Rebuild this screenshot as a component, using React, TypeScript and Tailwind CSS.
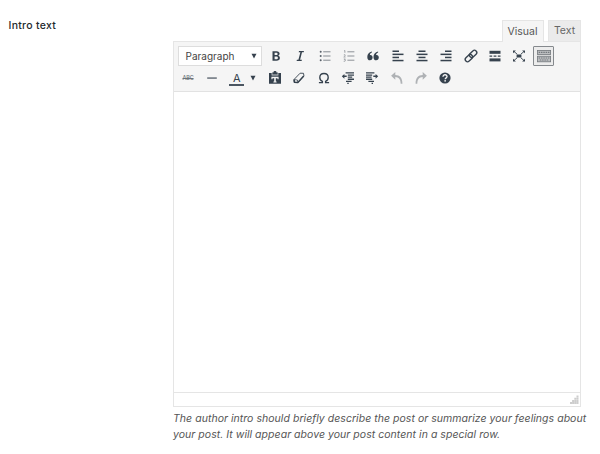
import React from 'react';

type IconProps = { children: React.ReactNode; className?: string };

// Every glyph is drawn on a 20x20 grid centred on 10,10.
function Icon({ children, className = 'text-[#36424e]' }: IconProps) {
  return (
    <svg viewBox="0 0 20 20" className={`h-5 w-5 shrink-0 ${className}`} fill="currentColor">
      {children}
    </svg>
  );
}

function Tool({ label, children }: { label: string; children: React.ReactNode }) {
  return (
    <button aria-label={label} className="flex h-[22px] w-[24.33px] shrink-0 items-center justify-center">
      {children}
    </button>
  );
}

const line = { fill: 'none', stroke: 'currentColor' };

function Lines({ rows }: { rows: number[][] }) {
  return (
    <>
      {rows.map(([x, y, w], i) => (
        <rect key={i} x={x} y={y} width={w} height={1.5} />
      ))}
    </>
  );
}

const Bold = () => (
  <Icon>
    <path fillRule="evenodd" d="M6.5 5.2h4.1c1.9 0 3 .9 3 2.4 0 1-.5 1.7-1.4 2.1 1.1.3 1.7 1.1 1.7 2.3 0 1.8-1.3 2.8-3.4 2.8h-4zm2.1 1.5v2.4h1.5c1 0 1.5-.4 1.5-1.2s-.5-1.2-1.5-1.2zm0 3.9v2.7h1.7c1 0 1.6-.5 1.6-1.4 0-.8-.6-1.3-1.7-1.3z" />
  </Icon>
);

const Italic = () => (
  <Icon>
    <path d="M9 5.1h5l-.3 1.2H12l-1.9 7.5h1.8l-.3 1.2h-5l.3-1.2h1.5l2-7.5H8.7z" />
  </Icon>
);

const Bullets = () => (
  <Icon className="text-[#858b91]">
    {[5.8, 10, 14.2].map((y) => (
      <g key={y}>
        <circle cx="5.7" cy={y} r="1" fill="#59616a" />
        <rect x="8.2" y={y - 0.5} width="7.3" height="1" />
      </g>
    ))}
  </Icon>
);

const Numbers = () => (
  <Icon className="text-[#8d9297]">
    {[5.8, 10, 14.2].map((y) => (
      <rect key={y} x="8.4" y={y - 0.5} width="7" height="1" />
    ))}
    <path {...line} strokeWidth=".8" d="M5 5l.9-.5v2.3M4.8 8.9c1.8-.8 1.9.5 0 2.1h1.8M4.8 13h1.6l-.9 1c1.6.2 1 1.7-.8 1.3" />
  </Icon>
);

const Quote = () => (
  <Icon>
    <path d="M8.9 5.5v1.1c-1.4.6-2 1.5-2 2.5.2-.1.4-.1.6-.1 1.2 0 2.1.9 2.1 2.5S8.6 14.3 7 14.3c-1.7 0-2.7-1.3-2.7-3.4 0-2.7 1.6-4.8 4.6-5.4zm6.2 0v1.1c-1.4.6-2 1.5-2 2.5.2-.1.4-.1.6-.1 1.2 0 2.1.9 2.1 2.5s-1 2.8-2.6 2.8c-1.7 0-2.7-1.3-2.7-3.4 0-2.7 1.6-4.8 4.6-5.4z" />
  </Icon>
);

const AlignLeft = () => (
  <Icon>
    <Lines rows={[[4.5, 4.5, 6.5], [4.5, 7.6, 11], [4.5, 10.7, 6.5], [4.5, 13.8, 11]]} />
  </Icon>
);
const AlignCenter = () => (
  <Icon>
    <Lines rows={[[6.5, 4.5, 7], [4.5, 7.6, 11], [6.5, 10.7, 7], [4.5, 13.8, 11]]} />
  </Icon>
);
const AlignRight = () => (
  <Icon>
    <Lines rows={[[9, 4.5, 6.5], [4.5, 7.6, 11], [9, 10.7, 6.5], [4.5, 13.8, 11]]} />
  </Icon>
);

const Link = () => (
  <Icon>
    <g {...line} strokeWidth="1.35" transform="rotate(-45 10 10)">
      <rect x="2.8" y="7.7" width="8.4" height="4.6" rx="2.3" />
      <rect x="8.8" y="7.7" width="8.4" height="4.6" rx="2.3" />
    </g>
  </Icon>
);

const ReadMore = () => (
  <Icon>
    <rect x="4.5" y="4.8" width="11" height="3" />
    <path d="M4.5 9.5h2.7v1.2H4.5zm4.1 0h2.8v1.2H8.6zm4.2 0h2.7v1.2h-2.7z" />
    <rect x="4.5" y="12.4" width="11" height="3" />
  </Icon>
);

const Fullscreen = () => (
  <Icon>
    <path {...line} strokeWidth=".9" d="M5 5.5l3.2 2.7M15 5.5l-3.2 2.7M5 14.5l3.2-2.7M15 14.5l-3.2-2.7" />
    <path d="M7.6 8.6h4.8v2.8H7.6zM4 4.4h2.9L4 7.2zM16 4.4h-2.9L16 7.2zM4 15.6h2.9L4 12.8zM16 15.6h-2.9L16 12.8z" />
  </Icon>
);

const Keyboard = () => (
  <Icon className="text-[#74797e]">
    <rect x="3.2" y="4.2" width="13.6" height="4.4" fill="#bcbec0" />
    <rect x="3.2" y="10" width="13.6" height="6" fill="#bcbec0" />
    <rect {...line} strokeWidth=".8" x="3.4" y="4.4" width="13.2" height="4" />
    <rect {...line} strokeWidth=".8" x="3.4" y="10.2" width="13.2" height="5.6" />
    <path {...line} strokeWidth="1.1" strokeDasharray="1.5 .8" d="M4.7 6.4h11M4.7 12h11M5.8 14h9" />
  </Icon>
);

const Paste = () => (
  <Icon>
    <path d="M4 5h3.2v-.6h1.2c.1-1 .8-1.4 1.6-1.4s1.5.4 1.6 1.4h1.2V5H16v10.8H4z" />
    <path fill="#c9cdd0" d="M6.6 5h.8v1.6h5.2V5h.8v2.4H6.6z" />
    <path fill="#f5f5f5" d="M6.4 8.8h7.2v2.4h-1.1v-1h-1.7v3.2h.8v1.1H8.4v-1.1h.8v-3.2H7.5v1H6.4z" />
  </Icon>
);

const Eraser = () => (
  <Icon>
    <path {...line} strokeWidth=".9" strokeLinejoin="round" d="M5 11.5l6.1-6.3 3.4.1.4 2.5-6 6.7-3.6-.2z" />
    <path {...line} strokeWidth="1.5" strokeLinejoin="round" d="M5.1 11.6l.3 2.6 3.4.3 6-6.6" />
    <path {...line} strokeWidth=".8" d="M5.2 11.6l3.2.4.5 2.2" />
  </Icon>
);

const Omega = () => (
  <Icon>
    <path {...line} strokeWidth="1.35" d="M4.9 14.6h3.5v-1.2C6.7 12.6 5.8 11.2 5.8 9.5c0-2.4 1.7-4 4.2-4s4.2 1.6 4.2 4c0 1.7-.9 3.1-2.6 3.9v1.2h3.5" />
  </Icon>
);

const Outdent = () => (
  <Icon>
    <path d="M7.6 4.3H16v1.3H7.6zm2.2 2.1H16v1.3H9.8zm0 2.1h4.4v1.3H9.8zm0 2.1H16v1.3H9.8zm-1.8 2.1h5.6V14H8zM3.8 8.3l2.6-2.4v1.6h2.3v1.6H6.4v1.6zM9.3 14.8h1.4v1.2H9.3z" />
  </Icon>
);
const Indent = () => (
  <Icon>
    <path d="M4 4.3h8.4v1.3H4zm0 2.1h6.2v1.3H4zm0 2.1h5.6v1.3H4zm0 2.1h6.2v1.3H4zm2.4 2.1H12V14H6.4zM16.2 8.3l-2.6-2.4v1.6h-2.3v1.6h2.3v1.6zM9.6 14.8H11v1.2H9.6z" />
  </Icon>
);

const Undo = () => (
  <Icon className="text-[#afb2b5]">
    <path d="M4.1 7.8l4.2-3.9v3C12.9 7 15.5 10 15.4 15.7h-1.7c-.1-4.4-1.9-6.4-5.4-6.7v2.8z" />
  </Icon>
);
const Redo = () => (
  <Icon className="text-[#afb2b5]">
    <path d="M15.9 7.8l-4.2-3.9v3C7.1 7 4.5 10 4.6 15.7h1.7c.1-4.4 1.9-6.4 5.4-6.7v2.8z" />
  </Icon>
);

const Help = () => (
  <Icon>
    <circle cx="10" cy="10" r="5.6" />
    <path {...line} stroke="#f5f5f5" strokeWidth="1.4" d="M8 8.7c0-2.8 4.2-2.5 4 0-.1 1.2-1.8 1.1-1.8 2.5" />
    <rect x="9.4" y="12.1" width="1.5" height="1.5" fill="#f5f5f5" />
  </Icon>
);

function Arrow() {
  return (
    <svg viewBox="0 0 6 6" className="h-1.5 w-1.5 shrink-0 text-[#36424e]" fill="currentColor">
      <path d="M.5 .8h5L3 5.6z" />
    </svg>
  );
}

export default function App() {
  return (
    <div className="flex h-[454px] w-[600px] overflow-hidden bg-white font-['Inter','Liberation_Sans',sans-serif] text-[#555]">
      <div className="w-[173px] shrink-0 pl-[8.5px] pt-[18px] text-[10.5px] font-medium leading-4 tracking-[0.28px] text-[#23282d]">
        Intro text
      </div>
      <div className="w-[427px] shrink-0 pt-5">
        <div className="flex h-[21px] w-[408px] justify-end gap-1 text-[10.5px] leading-5">
          <button className="z-10 h-[22px] w-[42px] border border-b-0 border-[#e5e5e5] bg-[#f5f5f5] pr-px text-[#555]">Visual</button>
          <button className="h-[21px] w-[33px] border border-b-0 border-[#e5e5e5] bg-[#ebebeb] text-[#666]">Text</button>
        </div>
        <div className="flex h-[366px] w-[408px] flex-col border border-[#e5e5e5]">
          <div className="h-[50px] shrink-0 border-b border-[#e2e2e2] bg-[#f5f5f5] pl-1 pt-[3px]">
            <div className="flex h-[22px] items-center">
              <button className="mr-[2px] flex h-5 w-[84px] shrink-0 items-center justify-between border border-[#ddd] bg-white pl-[6.5px] pr-1 text-[10px] text-[#444]">
                <span className="pt-px">Paragraph</span>
                <Arrow />
              </button>
              <Tool label="Bold"><Bold /></Tool>
              <Tool label="Italic"><Italic /></Tool>
              <Tool label="Bulleted list"><Bullets /></Tool>
              <Tool label="Numbered list"><Numbers /></Tool>
              <Tool label="Blockquote"><Quote /></Tool>
              <Tool label="Align left"><AlignLeft /></Tool>
              <Tool label="Align center"><AlignCenter /></Tool>
              <Tool label="Align right"><AlignRight /></Tool>
              <Tool label="Insert link"><Link /></Tool>
              <Tool label="Read more"><ReadMore /></Tool>
              <Tool label="Fullscreen"><Fullscreen /></Tool>
              <button aria-label="Toolbar toggle" className="ml-[1.5px] flex h-5 w-[21px] shrink-0 items-center justify-center rounded-[1px] border border-[#85898d] bg-[#ececec]">
                <Keyboard />
              </button>
            </div>
            <div className="flex h-[22px] items-center">
              <button className="flex h-[22px] w-[22px] shrink-0 items-center justify-center pr-[2px] text-[5.5px] font-medium tracking-[-0.2px] text-[#6c747b] line-through">ABC</button>
              <Tool label="Horizontal line">
                <Icon><rect x="5.2" y="9.5" width="9.6" height="1.1" /></Icon>
              </Tool>
              <button className="flex h-[22px] w-[38.5px] shrink-0 items-center gap-[6px] pl-[5px]">
                <span className="flex h-[15px] w-[15px] flex-col items-center border-b-2 border-[#4b5661] text-[11px] leading-[14px] text-[#36424e]">A</span>
                <Arrow />
              </button>
              <Tool label="Paste as text"><Paste /></Tool>
              <Tool label="Clear formatting"><Eraser /></Tool>
              <Tool label="Special character"><Omega /></Tool>
              <Tool label="Decrease indent"><Outdent /></Tool>
              <Tool label="Increase indent"><Indent /></Tool>
              <Tool label="Undo"><Undo /></Tool>
              <Tool label="Redo"><Redo /></Tool>
              <Tool label="Help"><Help /></Tool>
            </div>
          </div>
          <div className="flex-1 bg-white" />
          <div className="flex h-[14px] shrink-0 items-end justify-end border-t border-[#e5e5e5] pb-[2px] pr-[1px]">
            <svg viewBox="0 0 9 9" className="h-[9px] w-[9px]" fill="#cdcdcd">
              <path d="M6.5 .5h2v2h-2zM4.3 2.7h2v2h-2zM6.5 2.7h2v2h-2zM2.1 4.9h2v2h-2zM4.3 4.9h2v2h-2zM6.5 4.9h2v2h-2zM0 7.1h2v1.9H0zM2.1 7.1h2v1.9h-2zM4.3 7.1h2v1.9h-2zM6.5 7.1h2v1.9h-2z" />
            </svg>
          </div>
        </div>
        <p className="mt-1 whitespace-nowrap text-[10.5px] italic leading-4 tracking-[0.04px] text-[#555]">
          The author intro should briefly describe the post or summarize your feelings about
          <br />
          your post. It will appear above your post content in a special row.
        </p>
      </div>
    </div>
  );
}
